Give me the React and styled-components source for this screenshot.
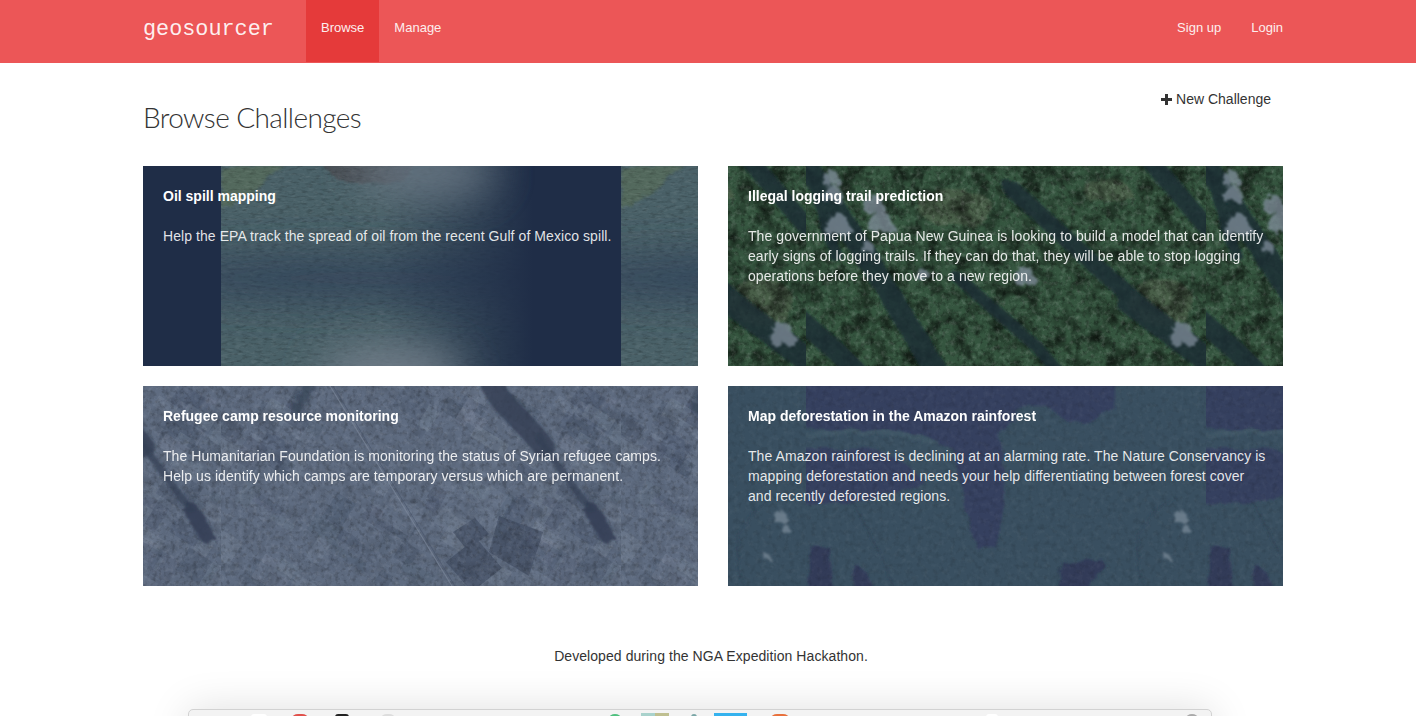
import React from "react";
import styled, { createGlobalStyle } from "styled-components";

const Global = createGlobalStyle`
  html, body { margin: 0; padding: 0; height: 716px; overflow: hidden; background: #fff; }
  body { font-family: "Liberation Sans", Arial, sans-serif; font-size: 14px; line-height: 20px; color: #333; }
`;

const Page = styled.div`
  height: 716px;
  overflow: hidden;
  display: flex;
  flex-direction: column;
  align-items: flex-start;
`;
const NavBar = styled.header`
  align-self: stretch;
  height: 63px;
  flex: none;
  background: #ec5657;
`;
const NavInner = styled.nav`
  width: 1140px;
  margin-left: 143px;
  display: flex;
  align-items: flex-start;
`;
const Brand = styled.a`
  width: 163px;
  height: 62px;
  line-height: 59px;
  font-family: "Liberation Mono", monospace;
  font-size: 21.8px;
  color: rgba(255, 255, 255, 0.92);
`;
const NavLink = styled.a`
  height: 62px;
  line-height: 56px;
  padding: 0 15px;
  font-size: 13px;
  color: #fdeeee;
  background: ${(p) => (p.$active ? "#e53a3a" : "transparent")};
  &:last-child { padding-right: 0; }
`;
const Spacer = styled.div`flex: 1;`;
const Main = styled.main`
  width: 1140px;
  margin-left: 143px;
  flex: none;
`;
const Head = styled.div`
  display: flex;
  justify-content: space-between;
  align-items: flex-start;
  height: 103px;
`;
const Title = styled.h1`
  margin: 37px 0 0;
  font-family: Lato, sans-serif;
  font-weight: 300;
  font-size: 28px;
  line-height: 34px;
  letter-spacing: -0.6px;
  color: #333;
`;
const NewButton = styled.a`
  margin-top: 26px;
  padding: 0 12px;
  display: flex;
  align-items: center;
  gap: 4px;
  color: #333;
`;
const Grid = styled.section`
  display: grid;
  grid-template-columns: 555px 555px;
  grid-auto-rows: 200px;
  column-gap: 30px;
  row-gap: 20px;
`;
const Card = styled.article`
  position: relative;
  overflow: hidden;
  padding: 20px;
  background: ${(p) => p.$bg};
  color: #fff;
`;
const Art = styled.svg`
  position: absolute;
  inset: 0;
  width: 555px;
  height: 200px;
`;
const CardTitle = styled.h3`
  position: relative;
  margin: 0 0 20px;
  font-size: 14px;
  line-height: 20px;
  font-weight: 700;
`;
const CardText = styled.p`
  position: relative;
  margin: 0 -6px 0 0;
  letter-spacing: 0.07px;
  color: rgba(255, 255, 255, 0.88);
`;
const Footer = styled.footer`
  margin: 60px 0 0 143px;
  width: 1136px;
  flex: none;
  text-align: center;
  letter-spacing: 0.07px;
  color: #333;
`;
const Dock = styled.div`
  margin: 43px 0 0 188px;
  width: 1024px;
  height: 120px;
  flex: none;
  box-sizing: border-box;
  border: 1px solid #d2d2d2;
  border-radius: 5px;
  background: #f3f3f3;
  box-shadow: 0 0 42px rgba(0, 0, 0, 0.13);
`;
const DockIcons = styled.svg`
  display: block;
  width: 1022px;
  height: 7px;
`;

const PlusIcon = () => (
  <svg width="11" height="11" viewBox="0 0 11 11"><path d="M4 0h3v4h4v3H7v4H4V7H0V4h4z" fill="#333" /></svg>
);

/* Shared filters for one satellite picture */
const Filters = ({ id, grain, contrast = 0.5, seed = 3, coarse = 0.05 }) => (
  <defs>
    <filter id={`${id}g`} x="0" y="0" width="100%" height="100%">
      <feTurbulence type="fractalNoise" baseFrequency={grain} numOctaves="3" seed={seed} />
      <feColorMatrix values={`0 0 0 0 0  0 0 0 0 0  0 0 0 0 0  ${contrast * 4} 0 0 0 ${-contrast * 1.9}`} />
      <feGaussianBlur stdDeviation="0.6" />
    </filter>
    <filter id={`${id}w`} x="0" y="0" width="100%" height="100%">
      <feTurbulence type="fractalNoise" baseFrequency={grain} numOctaves="3" seed={seed + 5} />
      <feColorMatrix values={`0 0 0 0 1  0 0 0 0 1  0 0 0 0 1  ${contrast * 3} 0 0 0 ${-contrast * 1.45}`} />
      <feGaussianBlur stdDeviation="0.6" />
    </filter>
    <filter id={`${id}k`} x="0" y="0" width="100%" height="100%">
      <feTurbulence type="fractalNoise" baseFrequency={coarse} numOctaves="3" seed={seed + 9} />
      <feColorMatrix values="0 0 0 0 0  0 0 0 0 0  0 0 0 0 0  2.2 0 0 0 -0.9" />
    </filter>
    <filter id={`${id}r`} x="-10%" y="-10%" width="120%" height="120%">
      <feTurbulence type="fractalNoise" baseFrequency="0.05" numOctaves="3" seed={seed + 1} />
      <feDisplacementMap in="SourceGraphic" scale="12" />
      <feGaussianBlur stdDeviation="1" />
    </filter>
    <filter id={`${id}f`} x="-40%" y="-40%" width="180%" height="180%">
      <feTurbulence type="fractalNoise" baseFrequency="0.16" numOctaves="2" seed={seed + 2} />
      <feDisplacementMap in="SourceGraphic" scale="9" />
      <feGaussianBlur stdDeviation="1.1" />
    </filter>
    <filter id={`${id}b`} filterUnits="userSpaceOnUse" x="-120" y="-120" width="640" height="440">
      <feGaussianBlur stdDeviation="20" />
    </filter>
  </defs>
);

const Tiled = ({ id, children }) => (
  <>
    <defs>
      <clipPath id={`${id}c`}><rect width="400" height="200" /></clipPath>
      <g id={`${id}t`} clipPath={`url(#${id}c)`}>{children}</g>
    </defs>
    <use href={`#${id}t`} x="-322" />
    <use href={`#${id}t`} x="78" />
    <use href={`#${id}t`} x="478" />
  </>
);

const Noise = ({ id, o = 1, coarse = 0 }) => (
  <>
    {coarse > 0 && <rect width="400" height="200" filter={`url(#${id}k)`} opacity={coarse} />}
    <rect width="400" height="200" filter={`url(#${id}g)`} opacity={o} />
    <rect width="400" height="200" filter={`url(#${id}w)`} opacity={o * 0.5} />
  </>
);

const OilArt = () => (
  <Art viewBox="0 0 555 200">
    <Filters id="a" grain="0.14 0.4" contrast={0.12} />
    <defs>
      <linearGradient id="afade" x1="0" x2="1">
        <stop offset="0.4" stopColor="#1f2d47" stopOpacity="0" />
        <stop offset="0.78" stopColor="#1f2d47" />
      </linearGradient>
    </defs>
    <Tiled id="a">
      <rect width="400" height="200" fill="#4a6168" />
      <path d="M0 0H62L38 22 10 40 0 42z" fill="#53695d" filter="url(#ar)" />
      <path d="M98 -4H192L180 12 150 19 115 12z" fill="#4a4f54" filter="url(#ar)" />
      <Noise id="a" />
      <ellipse cx="150" cy="112" rx="250" ry="24" fill="#2a3b54" opacity="0.7" filter="url(#ab)" />
      <rect width="400" height="200" fill="url(#afade)" />
      <ellipse cx="205" cy="6" rx="70" ry="28" fill="#6b7885" opacity="0.85" filter="url(#ab)" />
      <ellipse cx="170" cy="208" rx="72" ry="28" fill="#717d89" filter="url(#ab)" />
      <rect x="322" width="78" height="200" fill="#1f2d47" />
    </Tiled>
  </Art>
);

const Cloud = ({ x, y, s = 1 }) => (
  <g transform={`translate(${x} ${y}) scale(${s})`}>
    <ellipse rx="9" ry="8" /><ellipse cx="-6" cy="6" rx="6" ry="6" /><ellipse cx="6" cy="7" rx="7" ry="5" />
  </g>
);

const forestClouds = [[25, 10, 0.8], [27, 26, 0.85], [32, 56, 1.1], [68, 36, 0.9], [75, 54, 1.1], [117, 107, 0.55], [219, 108, 0.95], [377, 166, 1.15], [62, 80, 0.55]];

const ForestArt = () => (
  <Art viewBox="0 0 555 200">
    <Filters id="b" grain="0.2" contrast={0.24} coarse={0.06} />
    <Tiled id="b">
      <rect width="400" height="200" fill="#35553f" />
      <g fill="#616a54" opacity="0.45" filter="url(#br)">
        <ellipse cx="150" cy="42" rx="38" ry="18" />
        <ellipse cx="355" cy="136" rx="32" ry="24" />
        <ellipse cx="300" cy="25" rx="24" ry="12" />
      </g>
      <Noise id="b" coarse={0.65} />
      <g stroke="#1a2f36" fill="none" strokeLinecap="round" filter="url(#br)" opacity="0.82">
        <path d="M-6 -10L60 90 140 220" strokeWidth="22" />
        <path d="M205 22L290 100 372 172 420 210" strokeWidth="17" />
        <path d="M322 135L430 215" strokeWidth="24" />
        <path d="M-10 150L30 185 60 215" strokeWidth="20" />
        <path d="M150 110L230 180 260 215" strokeWidth="12" />
        <path d="M340 -10L400 60" strokeWidth="18" />
        <path d="M0 -10L30 90" strokeWidth="12" />
      </g>
      <g fill="#808e9b" opacity="0.75" filter="url(#bf)">
        {forestClouds.map(([x, y, s]) => <Cloud key={`${x}-${y}`} x={x} y={y} s={s} />)}
      </g>
    </Tiled>
  </Art>
);

/* deterministic field patches for the farmland picture */
const fields = (() => {
  let s = 17;
  const r = () => (s = (s * 16807) % 2147483647) / 2147483647;
  return Array.from({ length: 150 }, () => ({
    x: r() * 420 - 10, y: r() * 220 - 10, w: 10 + r() * 30, h: 8 + r() * 22,
    dark: r() > 0.5, o: 0.1 + r() * 0.22,
  }));
})();

const FarmArt = () => (
  <Art viewBox="0 0 555 200">
    <Filters id="c" grain="0.22" contrast={0.13} coarse={0.09} />
    <Tiled id="c">
      <rect width="400" height="200" fill="#5f6c81" />
      {fields.map((f, i) => (
        <rect key={i} x={f.x} y={f.y} width={f.w} height={f.h} fill={f.dark ? "#3f4c61" : "#7f8b9e"} opacity={f.o}
          transform={`rotate(32 ${f.x} ${f.y})`} />
      ))}
      <g fill="#3d4a5f" opacity="0.6">
        <path d="M225 176l30-24 26 30-30 24zM278 130l44 16-14 44-40-24zM232 146l22-14 14 16-22 16z" />
      </g>
      <Noise id="c" coarse={0.12} />
      <g fill="none" stroke="#333f54" strokeLinecap="round" filter="url(#cf)">
        <path d="M268 -8C278 20 300 30 322 60" strokeWidth="22" opacity="0.8" />
        <path d="M318 52C335 78 352 100 370 124" strokeWidth="7" opacity="0.7" />
        <path d="M370 124C378 134 380 142 386 150" strokeWidth="15" opacity="0.9" />
        <path d="M90 -5C86 8 82 14 76 22" strokeWidth="10" opacity="0.6" />
      </g>
      <path d="M106 -5L237 210" stroke="#7f8b9e" strokeWidth="1.2" opacity="0.6" fill="none" />
      <path d="M109 -5L240 210" stroke="#47546a" strokeWidth="1" opacity="0.6" fill="none" />
    </Tiled>
  </Art>
);

const AmazonArt = () => (
  <Art viewBox="0 0 555 200">
    <Filters id="d" grain="0.18" contrast={0.07} />
    <Tiled id="d">
      <rect width="400" height="200" fill="#394f60" />
      <g fill="#363f5f" filter="url(#dr)">
        <path d="M-10 -10H310V22L290 36H262L240 20H210L196 52 198 120 190 162H170L158 120 150 66 120 50 60 44 0 42z" />
        <path d="M-10 62H62L100 78 118 96 88 108 40 118H-10z" />
      </g>
      <g fill="#303b58" filter="url(#dr)">
        <path d="M252 210L258 178 292 170 300 180 280 210zM2 210L5 160 24 162 28 210zM46 210L50 178 64 190 70 210z" />
      </g>
      <path d="M-5 50C40 40 80 46 130 56" stroke="#3f5666" strokeWidth="5" fill="none" filter="url(#dr)" />
      <g fill="none" stroke="#2f4152" strokeWidth="1" filter="url(#dr)">
        <path d="M338 200C325 160 330 130 370 112" />
        <path d="M50 120C62 150 80 170 90 210" />
      </g>
      <Noise id="d" />
      <g fill="#7d8d9b" opacity="0.7" filter="url(#df)">
        <Cloud x={375} y={130} s={0.6} />
        <Cloud x={380} y={142} s={0.35} />
        <Cloud x={361} y={170} s={0.3} />
      </g>
    </Tiled>
  </Art>
);

const dockTops = [
  [62, 16, "#fff", 1], [103, 16, "#e0504a", 2], [146, 14, "#222", 1], [192, 14, "#ddd", 2], [420, 12, "#4fc07e", 2],
  [452, 14, "#a9d2cc", 0], [466, 14, "#bfbf90", 0], [502, 6, "#7aa6a6", 1], [525, 33, "#35b2ee", 0], [582, 18, "#e8703c", 2], [797, 12, "#fff", 1], [997, 12, "#aaa", 2],
];

const challenges = [
  { bg: "#1f2d47", Pic: OilArt, title: "Oil spill mapping", text: "Help the EPA track the spread of oil from the recent Gulf of Mexico spill." },
  { bg: "#2c463f", Pic: ForestArt, title: "Illegal logging trail prediction", text: "The government of Papua New Guinea is looking to build a model that can identify early signs of logging trails. If they can do that, they will be able to stop logging operations before they move to a new region." },
  { bg: "#5e6d85", Pic: FarmArt, title: "Refugee camp resource monitoring", text: "The Humanitarian Foundation is monitoring the status of Syrian refugee camps. Help us identify which camps are temporary versus which are permanent." },
  { bg: "#394f60", Pic: AmazonArt, title: "Map deforestation in the Amazon rainforest", text: "The Amazon rainforest is declining at an alarming rate. The Nature Conservancy is mapping deforestation and needs your help differentiating between forest cover and recently deforested regions." },
];

export default function App() {
  return (
    <Page>
      <Global />
      <NavBar>
        <NavInner>
          <Brand>geosourcer</Brand>
          <NavLink $active>Browse</NavLink>
          <NavLink>Manage</NavLink>
          <Spacer />
          <NavLink>Sign up</NavLink>
          <NavLink>Login</NavLink>
        </NavInner>
      </NavBar>
      <Main>
        <Head>
          <Title>Browse Challenges</Title>
          <NewButton><PlusIcon />New Challenge</NewButton>
        </Head>
        <Grid>
          {challenges.map(({ bg, Pic, title, text }) => (
            <Card key={title} $bg={bg}>
              <Pic />
              <CardTitle>{title}</CardTitle>
              <CardText>{text}</CardText>
            </Card>
          ))}
        </Grid>
      </Main>
      <Footer>Developed during the NGA Expedition Hackathon.</Footer>
      <Dock>
        <DockIcons viewBox="0 0 1022 7">
          {dockTops.map(([x, w, fill, r]) => (
            <rect key={x} x={x} y={r ? 4 : 3} width={w} height="8" rx={r * 3} fill={fill} />
          ))}
        </DockIcons>
      </Dock>
    </Page>
  );
}
